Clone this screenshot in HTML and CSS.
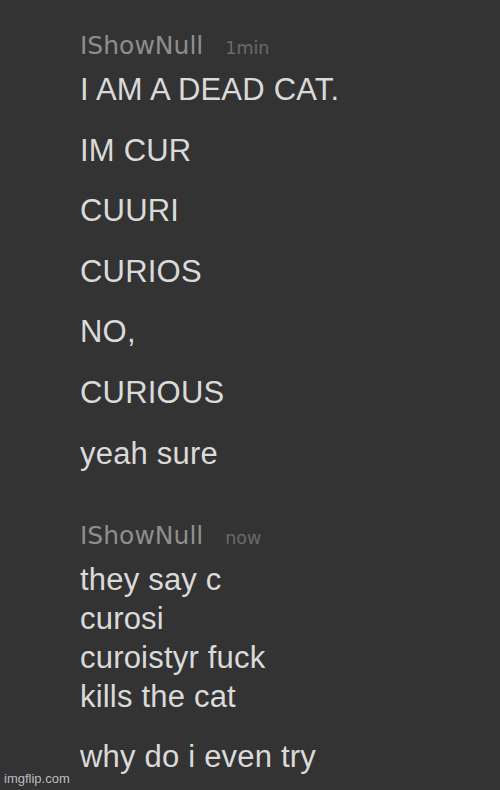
FILE: index.html
```html
<html lang="en">
 <head>
  <meta charset="UTF-8">
  <meta name="viewport" content="width=device-width, initial-scale=1.0">
  <title>Chat</title>
  <link rel="stylesheet" href="styles.css">
 </head>
 <body>
  <div class="chat">
   <div class="group">
    <div class="group-header">
     <span class="username">IShowNull</span>
     <span class="time">1min</span>
    </div>
    <div class="msg">I AM A DEAD CAT.</div>
    <div class="msg">IM CUR</div>
    <div class="msg">CUURI</div>
    <div class="msg">CURIOS</div>
    <div class="msg">NO,</div>
    <div class="msg">CURIOUS</div>
    <div class="msg">yeah sure</div>
   </div>
   <div class="group">
    <div class="group-header">
     <span class="username">IShowNull</span>
     <span class="time">now</span>
    </div>
    <div class="msg">they say c<br>curosi<br>curoistyr fuck<br>kills the cat</div>
    <div class="msg">why do i even try</div>
   </div>
  </div>
  <div class="watermark">imgflip.com</div>
 </body>
</html>
```

FILE: styles.css
```css
* {
    margin: 0;
    padding: 0;
    box-sizing: border-box;
    font-family: 'Liberation Sans', Arial, sans-serif;
}

body {
    background: #333333;
    width: 500px;
    height: 790px;
    overflow: hidden;
    position: relative;
}

.chat {
    padding: 34px 0 0 80px;
}

.group + .group {
    margin-top: 51px;
}

.group-header {
    display: flex;
    align-items: baseline;
    gap: 22px;
    height: 24px;
    line-height: 24px;
    margin-bottom: 12px;
}

.username {
    font-family: 'DejaVu Sans', sans-serif;
    font-size: 25px;
    color: #8e8e8e;
}

.time {
    font-family: 'DejaVu Sans', sans-serif;
    font-size: 17.5px;
    color: #6a6a6a;
}

.msg {
    font-size: 31px;
    letter-spacing: 0.2px;
    line-height: 39px;
    color: #dadada;
    margin-bottom: 21.6px;
}

.watermark {
    position: absolute;
    left: 4px;
    bottom: 4px;
    font-size: 13px;
    color: #bdbdbd;
}
```
